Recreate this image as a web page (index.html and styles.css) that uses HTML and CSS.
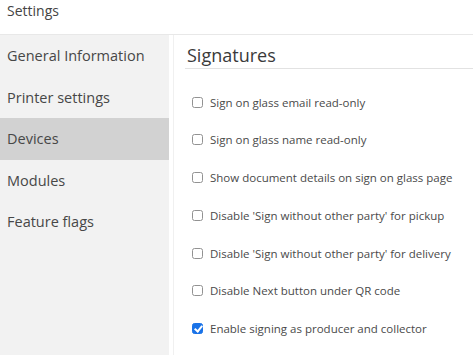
FILE: index.html
```html
<!DOCTYPE html>
<html lang="en">
<head>
  <meta charset="UTF-8">
  <title>Settings</title>
  <link rel="stylesheet" href="styles.css">
</head>
<body>
  <header class="topbar">Settings</header>
  <div class="layout">
    <nav class="sidebar">
      <a class="nav-item">General Information</a>
      <a class="nav-item">Printer settings</a>
      <a class="nav-item active">Devices</a>
      <a class="nav-item">Modules</a>
      <a class="nav-item">Feature flags</a>
    </nav>
    <main class="content">
      <h2 class="section-title">Signatures</h2>
      <ul class="options">
        <li><label><input type="checkbox" class="check"> Sign on glass email read-only</label></li>
        <li><label><input type="checkbox" class="check"> Sign on glass name read-only</label></li>
        <li><label><input type="checkbox" class="check"> Show document details on sign on glass page</label></li>
        <li><label><input type="checkbox" class="check"> Disable 'Sign without other party' for pickup</label></li>
        <li><label><input type="checkbox" class="check"> Disable 'Sign without other party' for delivery</label></li>
        <li><label><input type="checkbox" class="check"> Disable Next button under QR code</label></li>
        <li><label><input type="checkbox" class="check" checked> Enable signing as producer and collector</label></li>
      </ul>
    </main>
  </div>
</body>
</html>
```

FILE: styles.css
```css
* {
  margin: 0;
  padding: 0;
  box-sizing: border-box;
}

body {
  font-family: 'Open Sans', sans-serif;
  color: #444;
  background: #fff;
  height: 355px;
  display: flex;
  flex-direction: column;
  overflow: hidden;
}

.topbar {
  flex-shrink: 0;
  height: 35px;
  padding: 1px 7px 0;
  font-size: 14px;
  line-height: 20px;
  border-bottom: 1px solid #e8e8e8;
}

.layout {
  flex: 1;
  min-height: 0;
  display: flex;
  overflow: hidden;
}

.sidebar {
  width: 169px;
  background: #f2f2f2;
  display: flex;
  flex-direction: column;
}

.nav-item {
  flex-shrink: 0;
  height: 41.5px;
  display: flex;
  align-items: center;
  padding-left: 7px;
  font-size: 14.5px;
  color: #474747;
}

.nav-item.active {
  background: #d2d2d2;
}

.content {
  flex: 1;
  margin-left: 4px;
  border-left: 1px solid #f0f0f0;
  padding: 8px 0 0 11px;
}

.section-title {
  font-size: 18px;
  font-weight: 400;
  color: #3a3a3a;
  line-height: 25px;
  padding: 0 0 0 2px;
  border-bottom: 1px solid #e2e2e2;
}

.options {
  list-style: none;
  padding: 26px 0 0 7px;
}

.options li {
  height: 37.8px;
}

.options label {
  display: flex;
  align-items: center;
  gap: 7px;
  height: 14px;
  font-size: 11.5px;
  color: #4a4a4a;
}

.check {
  appearance: none;
  width: 11px;
  height: 11px;
  border: 1px solid #929292;
  border-radius: 2.5px;
  background: #fff;
  position: relative;
  flex-shrink: 0;
}

.check:checked {
  background: #1a73e8;
  border-color: #1a73e8;
}

.check:checked::after {
  content: '';
  position: absolute;
  left: 3px;
  top: 0px;
  width: 3px;
  height: 6px;
  border: solid #fff;
  border-width: 0 2px 2px 0;
  transform: rotate(40deg);
}
```
